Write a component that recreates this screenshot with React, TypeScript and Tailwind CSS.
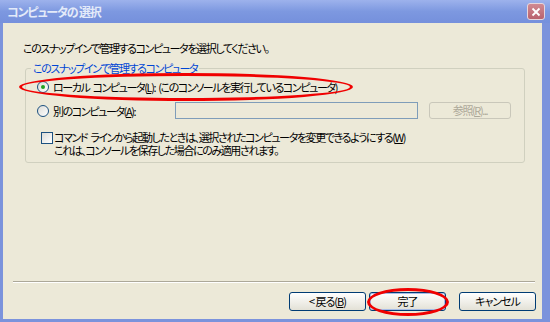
import React from 'react';

const jp = "font-['Noto_Sans_CJK_JP',sans-serif] [font-feature-settings:'palt']";

function U({ children }: { children: React.ReactNode }) {
  return <span className="underline underline-offset-1">{children}</span>;
}

function Radio({ checked }: { checked?: boolean }) {
  return (
    <div className="w-[12px] h-[12px] shrink-0 rounded-full border border-[#1c5180] bg-gradient-to-br from-[#dcdcd7] to-white flex items-center justify-center">
      {checked && <div className="w-[4px] h-[4px] rounded-full bg-[#21a121]" />}
    </div>
  );
}

function XpButton({ children, primary }: { children: React.ReactNode; primary?: boolean }) {
  return (
    <button
      className={
        'w-[77px] h-[19px] rounded-[3px] border border-[#003c74] bg-gradient-to-b from-white to-[#e3e1d6] text-[11px] tracking-[-1px] leading-none text-black flex items-center justify-center ' +
        (primary ? 'shadow-[inset_0_0_0_1px_#a7bde8]' : '')
      }
    >
      {children}
    </button>
  );
}

export default function App() {
  return (
    <div className={`relative w-[550px] h-[322px] overflow-hidden bg-[#7b93dc] ${jp}`}>
      {/* title bar */}
      <div className="h-[23px] bg-gradient-to-b from-[#9db2ec] via-[#7d98e0] to-[#7590dc] flex items-center justify-between pl-[7px] pr-[5px]">
        <span className="text-[12px] leading-none text-[#e3eaf9] font-bold tracking-[-1.2px]">コンピュータの 選択</span>
        <div className="w-[18px] h-[17px] rounded-[3px] border border-[#e6d6dc] bg-gradient-to-b from-[#d08a93] to-[#b9626d] flex items-center justify-center">
          <svg width="10" height="10" viewBox="0 0 10 10">
            <path d="M1.5 1.5 L8.5 8.5 M8.5 1.5 L1.5 8.5" stroke="white" strokeWidth="1.8" />
          </svg>
        </div>
      </div>

      {/* body */}
      <div className="ml-[3px] mr-[8px] h-[296px] bg-[#ece9d8] flex flex-col text-[11px] tracking-[-1.4px] text-black">
        <p className="mt-[19px] ml-[20px] leading-[12px]">このスナップインで管理するコンピュータを選択してください。</p>

        <div className="relative mt-[14px] ml-[22px] w-[500px] h-[95px] rounded-[3px] border border-[#d0d0bf] pt-[12px] pl-[11px] pr-[13px]">
          <span className="absolute -top-[7px] left-[5px] px-[2px] bg-[#ece9d8] text-[#0046d5] leading-[12px]">
            このスナップインで管理するコンピュータ
          </span>

          <div className="flex items-center gap-[4px] h-[12px]">
            <Radio checked />
            <span className="leading-[12px]">
              ローカル<span className="ml-[3px]">コンピュータ(<U>L</U>):</span>
              <span className="ml-[3px]">(このコンソールを実行しているコンピュータ)</span>
            </span>
          </div>

          <div className="flex items-center mt-[9px] h-[17px]">
            <div className="w-[138px] flex items-center gap-[4px]">
              <Radio />
              <span className="leading-[12px]">
                別のコンピュータ(<U>A</U>):
              </span>
            </div>
            <div className="w-[243px] h-[17px] border border-[#7f9db9] bg-[#ece9d8]" />
            <div className="ml-[11px] w-[82px] h-[17px] rounded-[3px] border border-[#c9c7ba] text-[#aca899] flex items-center justify-center leading-none">
              参照(<U>R</U>)...
            </div>
          </div>

          <div className="flex mt-[12px] pl-[4px]">
            <div className="w-[12px] h-[12px] shrink-0 mt-[1px] border border-[#1c5180] bg-gradient-to-br from-[#dcdcd7] to-white" />
            <p className="ml-[1px] leading-[13px]">
              コマンド<span className="ml-[3px]">ラインから起動したときは、選択されたコンピュータを変更できるようにする(<U>W</U>)</span>
              <br />
              これは、コンソールを保存した場合にのみ適用されます。
            </p>
          </div>
        </div>

        <div className="mt-[118px] ml-[10px] w-[522px] h-[2px] border-t border-[#aca899] border-b border-b-white" />

        <div className="mt-[9px] flex justify-end pr-[6px]">
          <XpButton>
            &lt; 戻る(<U>B</U>)
          </XpButton>
          <div className="ml-[3px]">
            <XpButton primary>完了</XpButton>
          </div>
          <div className="ml-[13px]">
            <XpButton>キャンセル</XpButton>
          </div>
        </div>
      </div>

      {/* red annotation ellipses */}
      <div className="absolute left-[19px] top-[73px] w-[334px] h-[28px] rounded-[50%] border-[3px] border-[#f00000]" />
      <div className="absolute left-[367px] top-[288px] w-[82px] h-[28px] rounded-[50%] border-[3px] border-[#f00000]" />
    </div>
  );
}
